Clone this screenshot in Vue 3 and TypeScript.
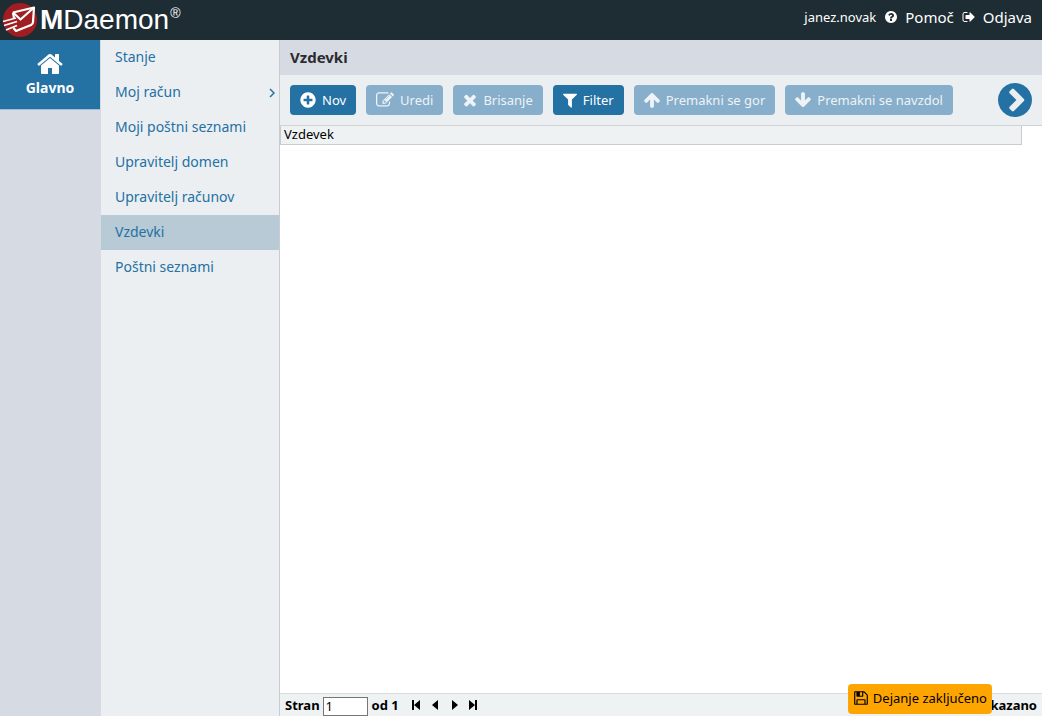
<script setup lang="ts">
import { ref } from 'vue'

const disc =
  'm320-64q0 209-103 385.5t-279.5 279.5-385.5 103-385.5-103-279.5-279.5-103-385.5 103-385.5 279.5-279.5 385.5-103 385.5 103 279.5 279.5 103 385.5z'

const icons = {
  help: 'M1024 1376v-192q0-14-9-23t-23-9h-192q-14 0-23 9t-9 23v192q0 14 9 23t23 9h192q14 0 23-9t9-23zm256-672q0-88-55.5-163t-138.5-116-170-41q-243 0-371 213-15 24 8 42l132 100q7 6 19 6 16 0 25-12 53-68 86-92 34-24 86-24 48 0 85.5 26t37.5 59q0 38-20 61t-68 45q-63 28-115.5 86.5t-52.5 125.5v36q0 14 9 23t23 9h192q14 0 23-9t9-23q0-19 21.5-49.5t54.5-49.5q32-18 49-28.5t46-35 44.5-48 28-60.5 12.5-81zm384 192q0 209-103 385.5t-279.5 279.5-385.5 103-385.5-103-279.5-279.5-103-385.5 103-385.5 279.5-279.5 385.5-103 385.5 103 279.5 279.5 103 385.5z',
  signOut: 'M704 1440q0 4 1 20t.5 26.5-3 23.5-10 19.5-20.5 6.5h-320q-119 0-203.5-84.5t-84.5-203.5v-704q0-119 84.5-203.5t203.5-84.5h320q13 0 22.5 9.5t9.5 22.5q0 4 1 20t.5 26.5-3 23.5-10 19.5-20.5 6.5h-320q-66 0-113 47t-47 113v704q0 66 47 113t113 47h312l11.5 1 11.5 3 8 5.5 7 9 2 13.5zm928-544q0 26-19 45l-544 544q-19 19-45 19t-45-19-19-45v-288h-448q-26 0-45-19t-19-45v-384q0-26 19-45t45-19h448v-288q0-26 19-45t45-19 45 19l544 544q19 19 19 45z',
  home: 'M1472 992v480q0 26-19 45t-45 19h-384v-384h-256v384h-384q-26 0-45-19t-19-45v-480q0-1 .5-3t.5-3l575-474 575 474q1 2 1 6zm223-69l-62 74q-8 9-21 11h-3q-13 0-21-7l-692-577-692 577q-12 8-24 7-13-2-21-11l-62-74q-8-10-7-23.5t11-21.5l719-599q32-26 76-26t76 26l244 204v-195q0-14 9-23t23-9h192q14 0 23 9t9 23v408l219 182q10 8 11 21.5t-7 23.5z',
  plus: 'M1344 960v-128q0-26-19-45t-45-19h-256v-256q0-26-19-45t-45-19h-128q-26 0-45 19t-19 45v256h-256q-26 0-45 19t-19 45v128q0 26 19 45t45 19h256v256q0 26 19 45t45 19h128q26 0 45-19t19-45v-256h256q26 0 45-19t19-45z' + disc,
  edit: 'M888 1184l116-116-152-152-116 116v56h96v96h56zm440-720q-16-16-33 1l-350 350q-17 17-1 33t33-1l350-350q17-17 1-33zm80 594v190q0 119-84.5 203.5t-203.5 84.5h-832q-119 0-203.5-84.5t-84.5-203.5v-832q0-119 84.5-203.5t203.5-84.5h832q63 0 117 25 15 7 18 23 3 17-9 29l-49 49q-14 14-32 8-23-6-45-6h-832q-66 0-113 47t-47 113v832q0 66 47 113t113 47h832q66 0 113-47t47-113v-126q0-13 9-22l64-64q15-15 35-7t20 29zm-96-738l288 288-672 672h-288v-288zm444 132l-92 92-288-288 92-92q28-28 68-28t68 28l152 152q28 28 28 68t-28 68z',
  times: 'M1490 1322q0 40-28 68l-136 136q-28 28-68 28t-68-28l-294-294-294 294q-28 28-68 28t-68-28l-136-136q-28-28-28-68t28-68l294-294-294-294q-28-28-28-68t28-68l136-136q28-28 68-28t68 28l294 294 294-294q28-28 68-28t68 28l136 136q28 28 28 68t-28 68l-294 294 294 294q28 28 28 68z',
  filter: 'M1595 295q17 41-14 70l-493 493v742q0 42-39 59-13 5-25 5-27 0-45-19l-256-256q-19-19-19-45v-486l-493-493q-31-29-14-70 17-39 59-39h1280q42 0 59 39z',
  up: 'M1675 971q0 51-37 90l-75 75q-38 38-91 38-54 0-90-38l-294-293v704q0 52-37.5 84.5t-90.5 32.5h-128q-53 0-90.5-32.5t-37.5-84.5v-704l-294 293q-36 38-90 38t-90-38l-75-75q-38-38-38-90 0-53 38-91l651-651q35-37 90-37 54 0 91 37l651 651q37 39 37 91z',
  next: 'M845 1395l454-454q19-19 19-45t-19-45l-454-454q-19-19-45-19t-45 19l-102 102q-19 19-19 45t19 45l307 307-307 307q-19 19-19 45t19 45l102 102q19 19 45 19t45-19zm819-499q0 209-103 385.5t-279.5 279.5-385.5 103-385.5-103-279.5-279.5-103-385.5 103-385.5 279.5-279.5 385.5-103 385.5 103 279.5 279.5 103 385.5z',
  save: 'M512 1536h768v-384h-768v384zm896 0h128v-896q0-14-10-38.5t-20-34.5l-281-281q-10-10-34-20t-39-10v416q0 40-28 68t-68 28h-576q-40 0-68-28t-28-68v-416h-128v1280h128v-416q0-40 28-68t68-28h832q40 0 68 28t28 68v416zm-384-928v-320q0-13-9.5-22.5t-22.5-9.5h-192q-13 0-22.5 9.5t-9.5 22.5v320q0 13 9.5 22.5t22.5 9.5h192q13 0 22.5-9.5t9.5-22.5zm640 32v928q0 40-28 68t-68 28h-1344q-40 0-68-28t-28-68v-1344q0-40 28-68t68-28h928q40 0 88 20t76 48l280 280q28 28 48 76t20 88z',
}

interface MenuItem {
  label: string
  sub?: boolean
}

const menu: MenuItem[] = [
  { label: 'Stanje' },
  { label: 'Moj račun', sub: true },
  { label: 'Moji poštni seznami' },
  { label: 'Upravitelj domen' },
  { label: 'Upravitelj računov' },
  { label: 'Vzdevki' },
  { label: 'Poštni seznami' },
]

interface Tool {
  label: string
  icon: string
  box: string
  size: 'narrow' | 'medium' | 'wide'
  disabled: boolean
  flip?: boolean
}

const narrow = '192 0 1408 1792'
const medium = '96 0 1600 1792'
const wide = '0 0 1792 1792'

const tools: Tool[] = [
  { label: 'Nov', icon: icons.plus, box: medium, size: 'medium', disabled: false },
  { label: 'Uredi', icon: icons.edit, box: wide, size: 'wide', disabled: true },
  { label: 'Brisanje', icon: icons.times, box: narrow, size: 'narrow', disabled: true },
  { label: 'Filter', icon: icons.filter, box: narrow, size: 'narrow', disabled: false },
  { label: 'Premakni se gor', icon: icons.up, box: medium, size: 'medium', disabled: true },
  { label: 'Premakni se navzdol', icon: icons.up, box: medium, size: 'medium', disabled: true, flip: true },
]

const pagers = [
  { name: 'Prva stran', d: 'M1 1h2v10H1zM9 1v10L3 6z' },
  { name: 'Prejšnja stran', d: 'M8 1v10L2 6z' },
  { name: 'Naslednja stran', d: 'M3 1v10l6-5z' },
  { name: 'Zadnja stran', d: 'M1 1v10l6-5zM7 1h2v10H7z' },
]

const active = ref('Vzdevki')
const page = ref('1')
</script>

<template>
  <div class="app">
    <header class="top">
      <div class="brand">
        <svg class="mark" viewBox="0 0 36 36" aria-hidden="true">
          <circle cx="18" cy="18" r="17" fill="#a01e22" />
          <g fill="none" stroke="#fff" stroke-width="2.200" stroke-linejoin="round">
            <path d="M11 10.500 L32 5.500 L31 20 Q31 22 29 23 L14 29 L11.500 26" />
            <path d="M11 10.500 L18.500 17.500 L32 5.500" />
            <path d="M11 10.500 L12 16" />
            <path d="M1 19.500 L14 16 M2 23.500 L15 19.500 M4 28 L15 23.500" stroke-width="1.800" />
          </g>
        </svg>
        <span class="word"><b>M</b>Daemon</span><span class="reg">®</span>
      </div>
      <nav class="account" aria-label="Uporabnik">
        <span class="user">janez.novak</span>
        <a href="#help"><svg viewBox="0 0 1792 1792" aria-hidden="true"><path :d="icons.help" /></svg>Pomoč</a>
        <a href="#logout"><svg viewBox="0 0 1792 1792" aria-hidden="true"><path :d="icons.signOut" /></svg>Odjava</a>
      </nav>
    </header>

    <div class="body">
      <nav class="rail" aria-label="Glavni meni">
        <a class="rail-item" href="#main">
          <svg viewBox="0 0 1792 1792" aria-hidden="true"><path :d="icons.home" /></svg>
          Glavno
        </a>
      </nav>

      <nav class="side" aria-label="Podmeni">
        <a
          v-for="m in menu"
          :key="m.label"
          href="#menu"
          :class="{ active: m.label === active }"
          @click.prevent="active = m.label"
        >
          {{ m.label }}
          <svg v-if="m.sub" viewBox="0 0 6 10" aria-hidden="true"><path d="M1 1l4 4-4 4" /></svg>
        </a>
      </nav>

      <main class="main">
        <h1>Vzdevki</h1>
        <div class="toolbar">
          <button v-for="t in tools" :key="t.label" type="button" class="tool" :disabled="t.disabled">
            <svg :viewBox="t.box" :class="[t.size, { flip: t.flip }]" aria-hidden="true"><path :d="t.icon" /></svg>
            {{ t.label }}
          </button>
          <button type="button" class="more" aria-label="Več">
            <svg viewBox="128 128 1536 1536" aria-hidden="true"><path :d="icons.next" /></svg>
          </button>
        </div>

        <div class="list">
          <table>
            <thead>
              <tr><th scope="col">Vzdevek</th></tr>
            </thead>
          </table>
        </div>

        <footer class="pager">
          <label for="page">Stran</label>
          <input id="page" v-model="page" type="text" />
          <span>od 1</span>
          <div class="steps">
            <button v-for="p in pagers" :key="p.name" type="button" :aria-label="p.name">
              <svg viewBox="0 0 10 12" aria-hidden="true"><path :d="p.d" /></svg>
            </button>
          </div>
          <span class="shown">kazano</span>
        </footer>
      </main>
    </div>

    <div class="toast" role="status">
      <svg viewBox="0 0 1792 1792" aria-hidden="true"><path :d="icons.save" /></svg>
      Dejanje zaključeno
    </div>
  </div>
</template>

<style>
body {
  margin: 0;
}
</style>

<style scoped>
.app {
  position: relative;
  display: flex;
  flex-direction: column;
  height: 100vh;
  overflow: hidden;
  font-family: "Noto Sans", "Open Sans", sans-serif;
  font-size: 13px;
  color: #000;
  background: #fff;
}
svg {
  display: block;
  flex: none;
  fill: currentColor;
}
a {
  color: inherit;
  text-decoration: none;
}
button {
  font: inherit;
  border: 0;
  padding: 0;
  background: none;
}
.top {
  display: flex;
  justify-content: space-between;
  flex: none;
  height: 40px;
  color: #fff;
  background: #1e2c33;
}
.brand {
  display: flex;
  align-items: center;
  padding-left: 2px;
  font-family: "Liberation Sans", Arial, sans-serif;
}
.mark {
  width: 36px;
  height: 36px;
}
.word {
  margin-left: 2px;
  font-size: 28px;
  line-height: 40px;
}
.reg {
  align-self: flex-start;
  margin-left: 1px;
  padding-top: 5px;
  font-size: 14px;
  line-height: 16px;
}
.account {
  display: flex;
  align-items: center;
  gap: 8px;
  height: 34px;
  padding-right: 10px;
  font-size: 15px;
}
.account .user {
  font-size: 13px;
}
.account a {
  display: flex;
  align-items: center;
  gap: 7px;
}
.account svg {
  width: 14px;
  height: 14px;
}
.body {
  display: flex;
  flex: 1;
  min-height: 0;
}
.rail {
  flex: none;
  width: 100px;
  background: #d6dae2;
  border-right: 1px solid #d6dae2;
}
.rail-item {
  display: flex;
  flex-direction: column;
  align-items: center;
  height: 70px;
  box-sizing: border-box;
  padding-top: 10px;
  border-bottom: 1px solid #a3bdd2;
  color: #fff;
  background: #2471a3;
  font-size: 14px;
  font-weight: 700;
  line-height: 20px;
}
.rail-item svg {
  width: 28px;
  height: 28px;
}
.side {
  display: flex;
  flex-direction: column;
  flex: none;
  width: 178px;
  background: #eceff2;
  border-right: 1px solid #c9ccd0;
}
.side a {
  display: flex;
  align-items: center;
  justify-content: space-between;
  height: 35px;
  box-sizing: border-box;
  padding: 0 4px 3px 14px;
  color: #2471a3;
  font-size: 14px;
}
.side a.active {
  background: #b7cad6;
}
.side svg {
  width: 6px;
  height: 10px;
  margin-top: 4px;
  fill: none;
  stroke: currentColor;
  stroke-width: 1.5;
}
.main {
  display: flex;
  flex-direction: column;
  flex: 1;
  min-width: 0;
}
h1 {
  flex: none;
  margin: 0;
  padding: 0 10px;
  background: #d6dae2;
  color: #2b2b30;
  font-size: 15px;
  line-height: 35px;
}
.toolbar {
  display: flex;
  align-items: center;
  gap: 10px;
  flex: none;
  height: 50px;
  padding: 0 10px;
  background: #eceff2;
  border-bottom: 1px solid #d0d2d4;
}
.tool {
  display: flex;
  align-items: center;
  gap: 6px;
  height: 30px;
  padding: 0 10px;
  border-radius: 4px;
  color: #fff;
  background: #2471a3;
  font-size: 13px;
  white-space: nowrap;
}
.tool:disabled {
  color: #eef3f7;
  background: #87aeca;
}
.tool svg {
  height: 18px;
}
.narrow {
  width: 14px;
}
.medium {
  width: 16px;
}
.wide {
  width: 18px;
}
.flip {
  transform: rotate(180deg);
}
.more {
  margin-left: auto;
  color: #2471a3;
}
.more svg {
  width: 34px;
  height: 34px;
}
.list {
  flex: 1;
  min-height: 0;
  padding-right: 20px;
}
table {
  width: 100%;
  border-spacing: 0;
}
th {
  height: 18px;
  padding: 0 3px;
  border: 1px solid #c9cccc;
  border-top: 0;
  background: #eef2f3;
  font-size: 13px;
  font-weight: 400;
  line-height: 16px;
  text-align: left;
  vertical-align: top;
}
.pager {
  display: flex;
  align-items: center;
  flex: none;
  height: 22px;
  padding: 0 5px;
  border-top: 1px solid #d8dbdc;
  background: #eef2f3;
  font-weight: 700;
}
.pager input {
  width: 45px;
  height: 19px;
  box-sizing: border-box;
  margin: 2px 4px 0 3px;
  padding: 0 2px;
  border: 1px solid #767676;
  border-radius: 0;
  background: #fff;
  font: inherit;
  font-weight: 400;
}
.steps {
  display: flex;
  gap: 9px;
  margin-left: 12px;
  color: #1e2c33;
}
.steps svg {
  width: 10px;
  height: 12px;
}
.shown {
  margin-left: auto;
}
.toast {
  position: absolute;
  right: 50px;
  bottom: 2px;
  display: flex;
  align-items: center;
  gap: 4px;
  height: 30px;
  box-sizing: border-box;
  padding: 0 5px 2px;
  border-radius: 4px;
  background: #ffa500;
}
.toast svg {
  width: 16px;
  height: 16px;
}
</style>
